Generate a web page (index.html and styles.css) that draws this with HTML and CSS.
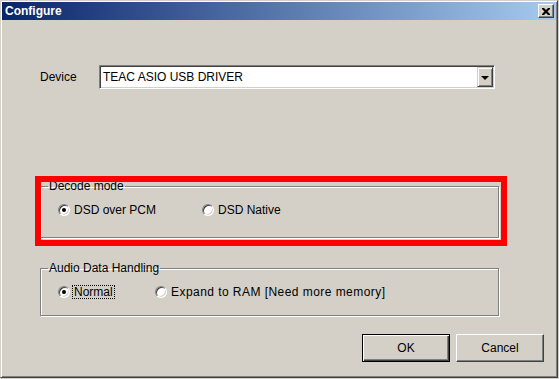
FILE: index.html
```html
<!DOCTYPE html>
<html lang="en">

<head>
    <meta charset="utf-8">
    <title>Configure</title>
    <link rel="stylesheet" href="styles.css">
</head>

<body>

    <div class="window">
        <div class="titlebar">
            <span class="title">Configure</span>
            <div class="close-btn">
                <svg width="8" height="7" viewBox="0 0 8 7">
                    <path d="M0 0h2l2 2 2-2h2v1l-2.5 2.5 2.5 2.5v1h-2l-2-2-2 2h-2v-1l2.5-2.5-2.5-2.5z" fill="#000" />
                </svg>
            </div>
        </div>

        <div class="client">
            <div class="device-row">
                <span class="device-label">Device</span>
                <div class="combo">
                    <span class="combo-value">TEAC ASIO USB DRIVER</span>
                    <span class="combo-btn"><span class="arrow"></span></span>
                </div>
            </div>

            <fieldset class="group group-decode">
                <legend>Decode mode</legend>
                <div class="options">
                    <label class="option opt-pcm"><span class="radio checked"></span><span>DSD over PCM</span></label>
                    <label class="option"><span class="radio"></span><span>DSD Native</span></label>
                </div>
            </fieldset>

            <fieldset class="group group-audio">
                <legend>Audio Data Handling</legend>
                <div class="options">
                    <label class="option opt-normal"><span class="radio checked"></span><span class="focus">Normal</span></label>
                    <label class="option"><span class="radio"></span><span class="expand-text">Expand to RAM [Need more memory]</span></label>
                </div>
            </fieldset>

            <div class="buttons">
                <div class="btn btn-default">OK</div>
                <div class="btn">Cancel</div>
            </div>
        </div>

        <!-- red marker drawn over the dialog -->
        <div class="highlight"></div>
    </div>

</body>

</html>
```

FILE: styles.css
```css
* {
    box-sizing: border-box;
}

body {
    margin: 0;
    background-color: #d4d0c8;
    font-family: "Liberation Sans", Arial, sans-serif;
    font-size: 12px;
    color: #000;
}

.window {
    position: relative;
    width: 558px;
    height: 378px;
    padding: 1px;
    background-color: #d4d0c8;
    border: 1px solid;
    border-color: #d4d0c8 #404040 #404040 #d4d0c8;
    box-shadow: inset 1px 1px #fff, inset -1px -1px #808080;
}

/* title bar */

.titlebar {
    height: 18px;
    display: flex;
    align-items: center;
    justify-content: space-between;
    padding: 0 2px 0 3px;
    background: linear-gradient(to right, #0a246a, #a6caf0);
}

.title {
    color: white;
    font-weight: bold;
    font-size: 12px;
}

.close-btn {
    width: 16px;
    height: 14px;
    display: flex;
    align-items: center;
    justify-content: center;
    background-color: #d4d0c8;
    border: 1px solid;
    border-color: #fff #404040 #404040 #fff;
    box-shadow: inset -1px -1px #808080;
}

/* client area */

.client {
    display: flex;
    flex-direction: column;
}

.device-row {
    display: flex;
    align-items: center;
    margin-top: 45px;
    padding-left: 38px;
}

.device-label {
    width: 59px;
}

.combo {
    width: 396px;
    height: 24px;
    display: flex;
    align-items: center;
    justify-content: space-between;
    background-color: white;
    border: 1px solid;
    border-color: #808080 #fff #fff #808080;
    box-shadow: inset 1px 1px #404040, inset -1px -1px #d4d0c8;
    padding: 1px 1px 1px 3px;
}

.combo-btn {
    width: 16px;
    height: 20px;
    display: flex;
    align-items: center;
    justify-content: center;
    background-color: #d4d0c8;
    border: 1px solid;
    border-color: #d4d0c8 #404040 #404040 #d4d0c8;
    box-shadow: inset 1px 1px #fff, inset -1px -1px #808080;
}

.arrow {
    width: 0;
    height: 0;
    border-left: 4px solid transparent;
    border-right: 4px solid transparent;
    border-top: 4px solid #000;
    margin-top: 1px;
}

/* group boxes */

.group {
    margin: 0 0 0 38px;
    width: 459px;
    padding: 0;
    border: 1px solid #808080;
    box-shadow: inset 1px 1px #fff, 1px 1px #fff;
}

.group legend {
    margin-left: 7px;
    padding: 0 1px;
    line-height: 12px;
}

.group-decode {
    margin-top: 91px;
    height: 58px;
}

.group-audio {
    margin-top: 24px;
    height: 54px;
}

.options {
    display: flex;
    align-items: center;
    height: 16px;
    margin-top: 10px;
    padding-left: 17px;
}

.option {
    display: flex;
    align-items: center;
    gap: 4px;
}

.opt-pcm {
    width: 144px;
}

.opt-normal {
    width: 97px;
    gap: 2px;
}

.expand-text {
    letter-spacing: 0.45px;
}

.radio {
    position: relative;
    width: 12px;
    height: 12px;
    border-radius: 50%;
    background-color: white;
    border: 1px solid;
    border-color: #808080 #fff #fff #808080;
    box-shadow: inset 1px 1px #404040, inset -1px -1px #d4d0c8;
}

.radio.checked::after {
    content: "";
    position: absolute;
    left: 3px;
    top: 3px;
    width: 4px;
    height: 4px;
    border-radius: 50%;
    background-color: #000;
}

.focus {
    border: 1px dotted #000;
    padding: 0 1px;
    line-height: 12px;
}

/* buttons */

.buttons {
    display: flex;
    justify-content: flex-end;
    gap: 6px;
    margin-top: 18px;
    padding-right: 12px;
}

.btn {
    width: 88px;
    height: 28px;
    display: flex;
    align-items: center;
    justify-content: center;
    border: 1px solid;
    border-color: #fff #404040 #404040 #fff;
    box-shadow: inset -1px -1px #808080;
}

.btn-default {
    border-color: #000;
    box-shadow: inset 1px 1px #fff, inset -1px -1px #404040, inset -2px -2px #808080;
}

/* red marker */

.highlight {
    position: absolute;
    left: 34px;
    top: 175px;
    width: 472px;
    height: 70px;
    border: 6px solid #f00;
}
```
